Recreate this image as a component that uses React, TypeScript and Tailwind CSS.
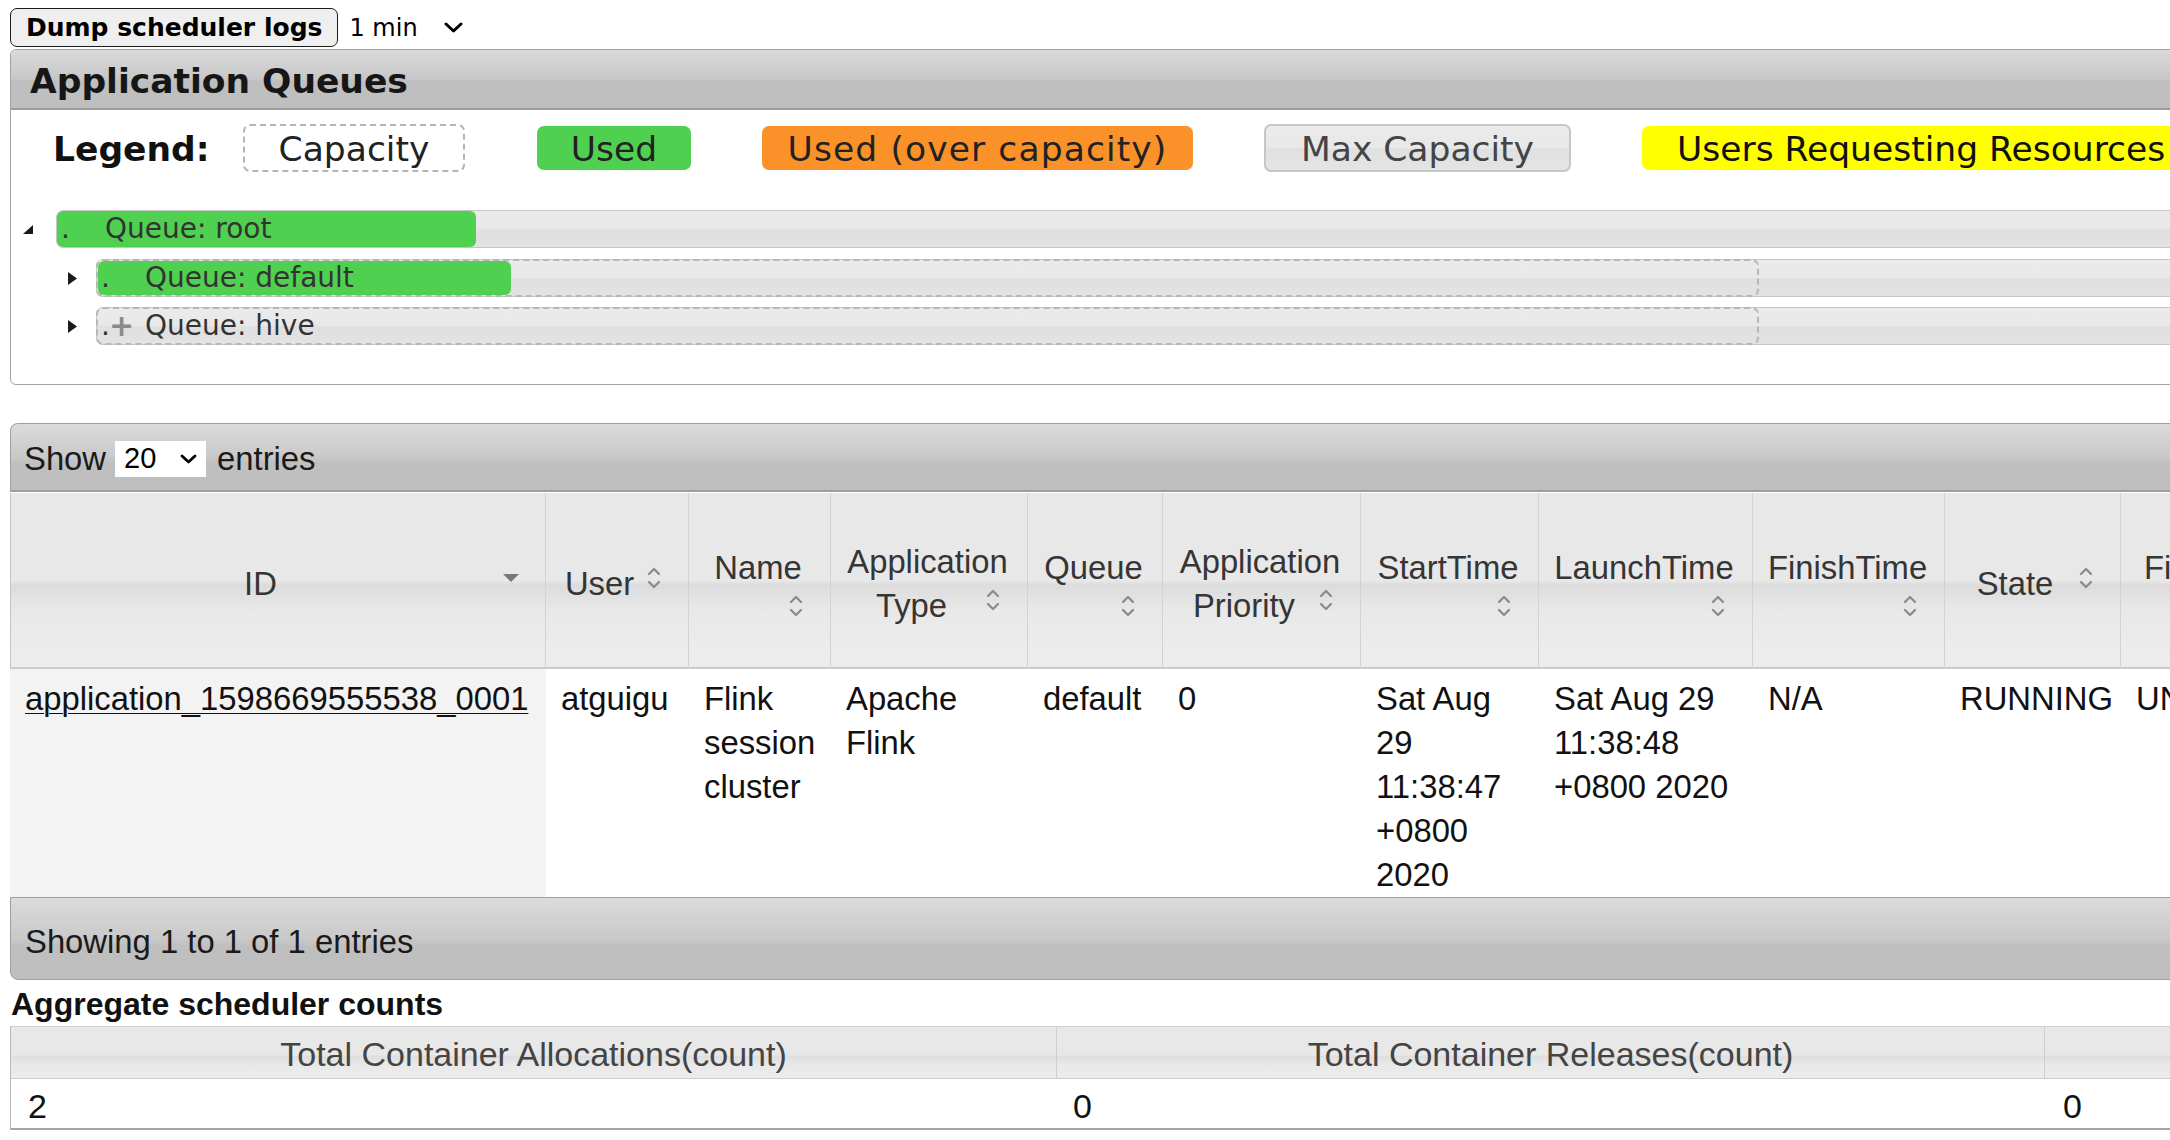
import React from 'react';

type Col = { w: number; lines: string[]; mode: 'inline' | 'below'; sorted?: boolean };

const cols: Col[] = [
  { w: 536, lines: ['ID'], mode: 'inline', sorted: true },
  { w: 143, lines: ['User'], mode: 'inline' },
  { w: 142, lines: ['Name'], mode: 'below' },
  { w: 197, lines: ['Application', 'Type'], mode: 'inline' },
  { w: 135, lines: ['Queue'], mode: 'below' },
  { w: 198, lines: ['Application', 'Priority'], mode: 'inline' },
  { w: 178, lines: ['StartTime'], mode: 'below' },
  { w: 214, lines: ['LaunchTime'], mode: 'below' },
  { w: 192, lines: ['FinishTime'], mode: 'below' },
  { w: 176, lines: ['State'], mode: 'inline' },
  { w: 214, lines: ['FinalStatus'], mode: 'below' },
  { w: 220, lines: ['Running', 'Containers'], mode: 'inline' },
];

const row = [
  'atguigu',
  'Flink session cluster',
  'Apache Flink',
  'default',
  '0',
  'Sat Aug 29 11:38:47 +0800 2020',
  'Sat Aug 29 11:38:48 +0800 2020',
  'N/A',
  'RUNNING',
  'UNDEFINED',
  '1',
];

function SortIcon() {
  return (
    <div className="w-[32px] h-[32px] shrink-0 flex items-center justify-center">
      <svg width="16" height="24" viewBox="0 0 16 24" fill="none" stroke="#8a8a8a" strokeWidth="2.2" strokeLinecap="round" strokeLinejoin="round">
        <polyline points="3,8 8,3 13,8" />
        <polyline points="3,16 8,21 13,16" />
      </svg>
    </div>
  );
}

function SortedIcon() {
  return (
    <div className="w-[32px] h-[32px] shrink-0 flex items-center justify-center">
      <svg width="16" height="8" viewBox="0 0 16 8">
        <polygon points="0,0 16,0 8,8" fill="#777777" />
      </svg>
    </div>
  );
}

function HeaderCell({ col, first }: { col: Col; first: boolean }) {
  const head = col.mode === 'inline' ? col.lines.slice(0, -1) : col.lines;
  const last = col.lines[col.lines.length - 1];
  const icon = col.sorted ? <SortedIcon /> : <SortIcon />;
  return (
    <div
      className={
        'h-[176px] flex flex-col justify-center pl-[15px] pr-[18px] pt-[8px] border-r border-r-[#d2d2d2] border-b-2 border-b-[#cbcbcb] ' +
        (first ? 'border-l border-l-[#c4c4c4]' : '')
      }
    >
      {head.map((l) => (
        <div key={l} className="text-center leading-[44px] whitespace-nowrap">
          {l}
        </div>
      ))}
      {col.mode === 'inline' ? (
        <div className="flex items-start">
          <div className="flex-1 text-center leading-[44px] whitespace-nowrap">{last}</div>
          {icon}
        </div>
      ) : (
        <div className="flex justify-end">{icon}</div>
      )}
    </div>
  );
}

function QueueBar({ label, used, capacity, plus }: { label: string; used?: number; capacity?: boolean; plus?: boolean }) {
  const text = (
    <>
      <span className={plus ? 'w-[8px]' : 'w-[44px]'}>.</span>
      {plus && <span className="w-[36px] text-[30px] font-bold text-[#8a8a8a] leading-none">+</span>}
      <span className="whitespace-nowrap">{label}</span>
    </>
  );
  return (
    <div className="flex-1 h-[38px] flex border border-[#c6c6c6] rounded-[7px] bg-[linear-gradient(to_bottom,#ebebeb_0%,#e8e8e8_50%,#dfdfdf_52%,#e3e3e3_100%)]">
      {capacity ? (
        <div className="w-[1663px] h-[38px] -mt-[1px] -ml-[1px] border-2 border-dashed border-[#b7b7b7] rounded-[7px]">
          {used ? (
            <div className="w-[413px] h-full rounded-[6px] bg-[#50d050] flex items-center pl-[3px]">{text}</div>
          ) : (
            <div className="h-full flex items-center pl-[3px]">{text}</div>
          )}
        </div>
      ) : (
        <div className="w-[419px] h-full rounded-[6px] bg-[#50d050] flex items-center pl-[4px]">{text}</div>
      )}
    </div>
  );
}

const aggHead =
  'h-[52px] flex items-center justify-center pt-[4px] border-t border-r border-[#cfcfcf] whitespace-nowrap bg-[linear-gradient(to_bottom,#e8e8e8_0%,#e8e8e8_55%,#dedede_57%,#e9e9e9_75%,#ececec_100%)]';

export default function App() {
  return (
    <div className="w-[2170px] h-[1140px] overflow-hidden bg-white text-[#111]">
      <div className="w-[3000px] pl-[10px] pt-[8px] font-['DejaVu_Sans',Verdana,sans-serif]">
        {/* top controls */}
        <div className="flex items-center h-[39px]">
          <button className="h-[39px] px-[15px] border-[1.5px] border-[#1c1c1c] rounded-[7px] bg-[#efefef] text-[25px] font-bold text-black leading-none">
            Dump scheduler logs
          </button>
          <div className="ml-[11px] flex items-center text-[24px] text-black">
            <span>1 min</span>
            <svg className="ml-[26px]" width="19" height="11" viewBox="0 0 19 11" fill="none" stroke="#000" strokeWidth="3" strokeLinecap="round" strokeLinejoin="round">
              <polyline points="2,2 9.5,9 17,2" />
            </svg>
          </div>
        </div>

        {/* Application Queues panel */}
        <div className="mt-[2px] border border-[#a2a2a2] rounded-[6px]">
          <div className="h-[60px] flex items-center pl-[19px] pt-[6px] border-b-2 border-b-[#9c9c9c] rounded-t-[6px] bg-[linear-gradient(to_bottom,#dadada_0%,#c7c7c7_50%,#bfbfbf_53%,#bfbfbf_100%)] text-[34.5px] font-bold text-[#161616]">
            Application Queues
          </div>
          <div className="pt-[14px] pb-[39px]">
            <div className="flex items-center h-[48px] pl-[42px] text-[34.5px]">
              <div className="w-[190px] pt-[3px] font-bold text-[#111]">Legend:</div>
              <div className="w-[222px] h-[48px] flex items-center justify-center pt-[3px] border-2 border-dashed border-[#b4b4b4] rounded-[7px] text-[#222]">
                Capacity
              </div>
              <div className="ml-[72px] w-[154px] h-[44px] flex items-center justify-center pt-[3px] rounded-[7px] bg-[#50d050] text-[#222]">
                Used
              </div>
              <div className="ml-[71px] w-[431px] h-[44px] flex items-center justify-center pt-[3px] rounded-[7px] bg-[#fb9129] text-[#222] whitespace-nowrap tracking-[1.1px]">
                Used (over capacity)
              </div>
              <div className="ml-[71px] w-[307px] h-[48px] flex items-center justify-center pt-[3px] border-2 border-[#c6c6c6] rounded-[7px] bg-[linear-gradient(to_bottom,#ebebeb_0%,#e8e8e8_50%,#e0e0e0_52%,#e4e4e4_100%)] text-[#444]">
                Max Capacity
              </div>
              <div className="ml-[71px] w-[560px] h-[44px] flex items-center pl-[35px] pt-[3px] rounded-[7px] bg-[#ffff00] text-[#111] whitespace-nowrap">
                Users Requesting Resources
              </div>
            </div>

            <div className="mt-[38px] flex flex-col gap-[11px] text-[28px] text-[#333]">
              <div className="flex items-center">
                <div className="w-[45px] pl-[12px]">
                  <svg width="10" height="9" viewBox="0 0 10 9">
                    <polygon points="10,0 10,9 0,9" fill="#1a1a1a" />
                  </svg>
                </div>
                <QueueBar label="Queue: root" />
              </div>
              <div className="flex items-center">
                <div className="w-[85px] pl-[57px]">
                  <svg width="9" height="13" viewBox="0 0 9 13">
                    <polygon points="0,0 9,6.5 0,13" fill="#1a1a1a" />
                  </svg>
                </div>
                <QueueBar label="Queue: default" used={413} capacity />
              </div>
              <div className="flex items-center -mt-[1px]">
                <div className="w-[85px] pl-[57px]">
                  <svg width="9" height="13" viewBox="0 0 9 13">
                    <polygon points="0,0 9,6.5 0,13" fill="#1a1a1a" />
                  </svg>
                </div>
                <QueueBar label="Queue: hive" capacity plus />
              </div>
            </div>
          </div>
        </div>

        {/* Applications table */}
        <div className="mt-[38px] font-['Liberation_Sans',Arial,Helvetica,sans-serif] text-[32.8px]">
          <div className="h-[69px] flex items-center pl-[13px] pt-[3px] border border-[#9e9e9e] border-b-2 rounded-tl-[8px] bg-[linear-gradient(to_bottom,#dbdbdb_0%,#c9c9c9_50%,#bfbfbf_60%,#bebebe_100%)] text-[#1a1a1a]">
            <span>Show</span>
            <div className="ml-[9px] w-[91px] h-[36px] bg-white flex items-center pl-[9px] text-[29px] text-black">
              <span>20</span>
              <svg className="ml-[24px]" width="17" height="10" viewBox="0 0 17 10" fill="none" stroke="#000" strokeWidth="2.8" strokeLinecap="round" strokeLinejoin="round">
                <polyline points="2,2 8.5,8 15,2" />
              </svg>
            </div>
            <span className="ml-[11px]">entries</span>
          </div>

          <div className="mt-[1px] grid grid-cols-[536px_143px_142px_197px_135px_198px_178px_214px_192px_176px_214px_220px] bg-[linear-gradient(to_bottom,#e8e8e8_0%,#e8e8e8_50%,#dcdcdc_52%,#e9e9e9_68%,#ededed_100%)] text-[#353535]">
            {cols.map((c, i) => (
              <HeaderCell key={i} col={c} first={i === 0} />
            ))}
          </div>

          <div className="grid grid-cols-[536px_143px_142px_197px_135px_198px_178px_214px_192px_176px_214px_220px] leading-[44px] text-[#111]">
            <div className="bg-[#f3f3f3] pl-[15px] pr-[12px] pt-[8px]">
              <a className="underline text-[#111] decoration-1 underline-offset-[3px]">application_1598669555538_0001</a>
            </div>
            {row.map((v, i) => (
              <div key={i} className="pl-[15px] pr-[12px] pt-[8px]">
                {v}
              </div>
            ))}
          </div>

          <div className="h-[83px] flex items-center pl-[14px] pt-[6px] border border-[#9e9e9e] rounded-bl-[8px] bg-[linear-gradient(to_bottom,#dbdbdb_0%,#c9c9c9_50%,#bfbfbf_60%,#bebebe_100%)] text-[#1a1a1a]">
            Showing 1 to 1 of 1 entries
          </div>

          {/* Aggregate scheduler counts */}
          <div className="h-[46px] flex items-center pt-[1px] pl-[1px] text-[32px] font-bold text-[#111]">
            Aggregate scheduler counts
          </div>
          <div className="grid grid-cols-[1046px_988px_1000px] border-l border-[#b8b8b8] text-[#444] text-[34px]">
            <div className={aggHead}>Total Container Allocations(count)</div>
            <div className={aggHead}>Total Container Releases(count)</div>
            <div className={aggHead}>Total Fulfilled Reservations(count)</div>
            <div className="h-[52px] flex items-center pl-[17px] pt-[5px] border-t border-b-2 border-t-[#cccccc] border-b-[#a4a4a4] text-[#111]">2</div>
            <div className="h-[52px] flex items-center pl-[16px] pt-[5px] border-t border-b-2 border-t-[#cccccc] border-b-[#a4a4a4] text-[#111]">0</div>
            <div className="h-[52px] flex items-center pl-[18px] pt-[5px] border-t border-b-2 border-t-[#cccccc] border-b-[#a4a4a4] text-[#111]">0</div>
          </div>
        </div>
      </div>
    </div>
  );
}
